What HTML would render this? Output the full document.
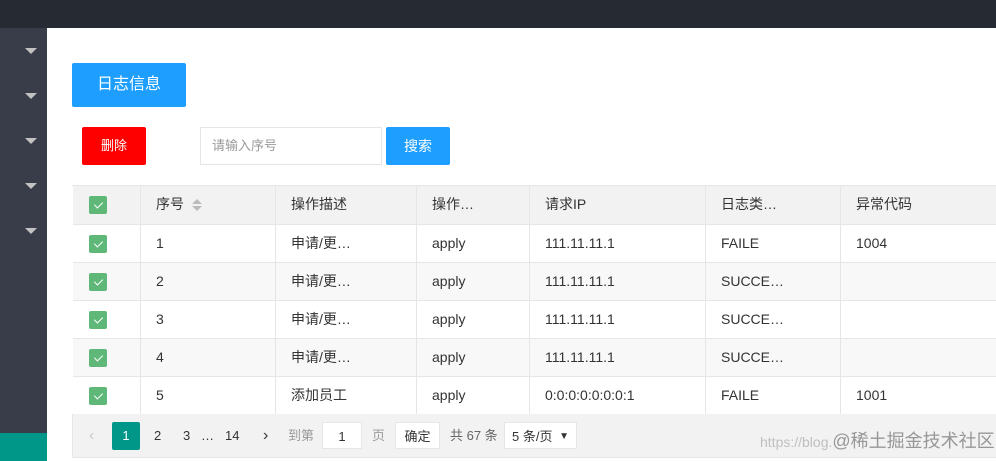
<!DOCTYPE html><html><head><meta charset="utf-8"><style>
*{margin:0;padding:0;box-sizing:border-box}
body{width:996px;height:461px;overflow:hidden;background:#fff;font-family:"Liberation Sans","Noto Sans CJK SC",sans-serif;font-size:14px;color:#333;position:relative}
.top{position:absolute;left:0;top:0;width:996px;height:28px;background:#262a33}
.side{position:absolute;left:0;top:28px;width:47px;height:433px;background:#393d49}
.side .teal{position:absolute;left:0;top:405px;width:47px;height:28px;background:#009688}
.arr{position:absolute;left:25px;width:0;height:0;border-left:6px solid transparent;border-right:6px solid transparent;border-top:6px solid #c2c2c2}
.btn{position:absolute;color:#fff;text-align:center;border-radius:2px}
.tbl{position:absolute;left:72px;top:185px;width:930px;border-top:1px solid #e6e6e6;border-left:1px solid #e6e6e6}
.row{position:absolute;left:0;width:930px;height:38px;border-bottom:1px solid #e6e6e6}
.c{position:absolute;top:0;height:100%;border-right:1px solid #e6e6e6;line-height:37px;padding-left:15px;white-space:nowrap}
.cb{width:18px;height:18px;background:#5fb878;border-radius:2px;position:absolute;left:16px;top:10px}
.cb:after{content:"";position:absolute;left:7px;top:4px;width:4px;height:7px;border-right:1px solid #fff;border-bottom:1px solid #fff;transform:rotate(45deg)}
.pg{position:absolute;left:72px;top:414px;width:930px;height:44px;background:#f2f2f2;border:1px solid #e6e6e6;border-top:none;font-size:13px}
.pg span{position:absolute;top:11px;line-height:22px}
.sort{display:inline-block;position:relative;width:10px;height:14px;vertical-align:middle;margin-left:8px}
.sort:before{content:"";position:absolute;left:0;top:1px;border-left:5px solid transparent;border-right:5px solid transparent;border-bottom:5px solid #bbb}
.sort:after{content:"";position:absolute;left:0;top:8px;border-left:5px solid transparent;border-right:5px solid transparent;border-top:5px solid #bbb}
</style></head><body>
<div class="top"></div>
<div class="side"><div class="teal"></div>
<div class="arr" style="top:20px"></div><div class="arr" style="top:65px"></div><div class="arr" style="top:110px"></div><div class="arr" style="top:155px"></div><div class="arr" style="top:200px"></div></div>
<div class="btn" style="left:72px;top:63px;width:114px;height:44px;line-height:44px;background:#1e9fff;font-size:16px">日志信息</div>
<div class="btn" style="left:82px;top:127px;width:64px;height:38px;line-height:38px;background:#ff0000;font-size:13px">删除</div>
<div style="position:absolute;left:200px;top:127px;width:182px;height:38px;border:1px solid #e6e6e6;line-height:36px;padding-left:11px;color:#999;font-size:13px">请输入序号</div>
<div class="btn" style="left:386px;top:127px;width:64px;height:38px;line-height:38px;background:#1e9fff;font-size:14px">搜索</div>
<div class="tbl">
<div class="row" style="top:0;height:39px;background:#f2f2f2"><div class="c" style="left:0;width:68px"><div class="cb"></div></div><div class="c" style="left:68px;width:135px">序号<span class="sort"></span></div><div class="c" style="left:203px;width:141px">操作描述</div><div class="c" style="left:344px;width:113px">操作…</div><div class="c" style="left:457px;width:176px">请求IP</div><div class="c" style="left:633px;width:135px">日志类…</div><div class="c" style="left:768px;width:162px">异常代码</div></div>
<div class="row" style="top:39px"><div class="c" style="left:0;width:68px"><div class="cb"></div></div><div class="c" style="left:68px;width:135px">1</div><div class="c" style="left:203px;width:141px">申请/更…</div><div class="c" style="left:344px;width:113px">apply</div><div class="c" style="left:457px;width:176px">111.11.11.1</div><div class="c" style="left:633px;width:135px">FAILE</div><div class="c" style="left:768px;width:162px">1004</div></div>
<div class="row" style="top:77px;background:#f8f8f8"><div class="c" style="left:0;width:68px"><div class="cb"></div></div><div class="c" style="left:68px;width:135px">2</div><div class="c" style="left:203px;width:141px">申请/更…</div><div class="c" style="left:344px;width:113px">apply</div><div class="c" style="left:457px;width:176px">111.11.11.1</div><div class="c" style="left:633px;width:135px">SUCCE…</div><div class="c" style="left:768px;width:162px"></div></div>
<div class="row" style="top:115px"><div class="c" style="left:0;width:68px"><div class="cb"></div></div><div class="c" style="left:68px;width:135px">3</div><div class="c" style="left:203px;width:141px">申请/更…</div><div class="c" style="left:344px;width:113px">apply</div><div class="c" style="left:457px;width:176px">111.11.11.1</div><div class="c" style="left:633px;width:135px">SUCCE…</div><div class="c" style="left:768px;width:162px"></div></div>
<div class="row" style="top:153px;background:#f8f8f8"><div class="c" style="left:0;width:68px"><div class="cb"></div></div><div class="c" style="left:68px;width:135px">4</div><div class="c" style="left:203px;width:141px">申请/更…</div><div class="c" style="left:344px;width:113px">apply</div><div class="c" style="left:457px;width:176px">111.11.11.1</div><div class="c" style="left:633px;width:135px">SUCCE…</div><div class="c" style="left:768px;width:162px"></div></div>
<div class="row" style="top:191px"><div class="c" style="left:0;width:68px"><div class="cb"></div></div><div class="c" style="left:68px;width:135px">5</div><div class="c" style="left:203px;width:141px">添加员工</div><div class="c" style="left:344px;width:113px">apply</div><div class="c" style="left:457px;width:176px">0:0:0:0:0:0:0:1</div><div class="c" style="left:633px;width:135px">FAILE</div><div class="c" style="left:768px;width:162px">1001</div></div>
</div>
<div class="pg">
<span style="left:16px;color:#ccc;font-size:16px">‹</span>
<span style="left:39px;width:28px;height:28px;top:8px;line-height:28px;background:#009688;color:#fff;text-align:center;border-radius:2px">1</span>
<span style="left:81px">2</span><span style="left:110px">3</span><span style="left:128px">…</span><span style="left:152px">14</span>
<span style="left:190px;font-size:16px">›</span>
<span style="left:215px;color:#999">到第</span>
<span style="left:249px;top:8px;width:40px;height:27px;line-height:27px;background:#fff;border:1px solid #e6e6e6;text-align:center">1</span>
<span style="left:299px;color:#999">页</span>
<span style="left:322px;top:8px;width:45px;height:27px;line-height:27px;background:#fff;border:1px solid #e6e6e6;text-align:center">确定</span>
<span style="left:377px;color:#666">共 67 条</span>
<span style="left:431px;top:8px;width:73px;height:27px;line-height:27px;background:#fff;border:1px solid #e6e6e6;padding-left:7px">5 条/页 <b style="position:absolute;right:7px;font-size:10px">▼</b></span>
</div>
<div style="position:absolute;left:760px;top:427px;white-space:nowrap;color:rgba(150,150,150,.55);font-size:14px">https://blog.<span style="color:rgba(120,120,120,.75);font-size:18px">@稀土掘金技术社区</span></div>
</body></html>
